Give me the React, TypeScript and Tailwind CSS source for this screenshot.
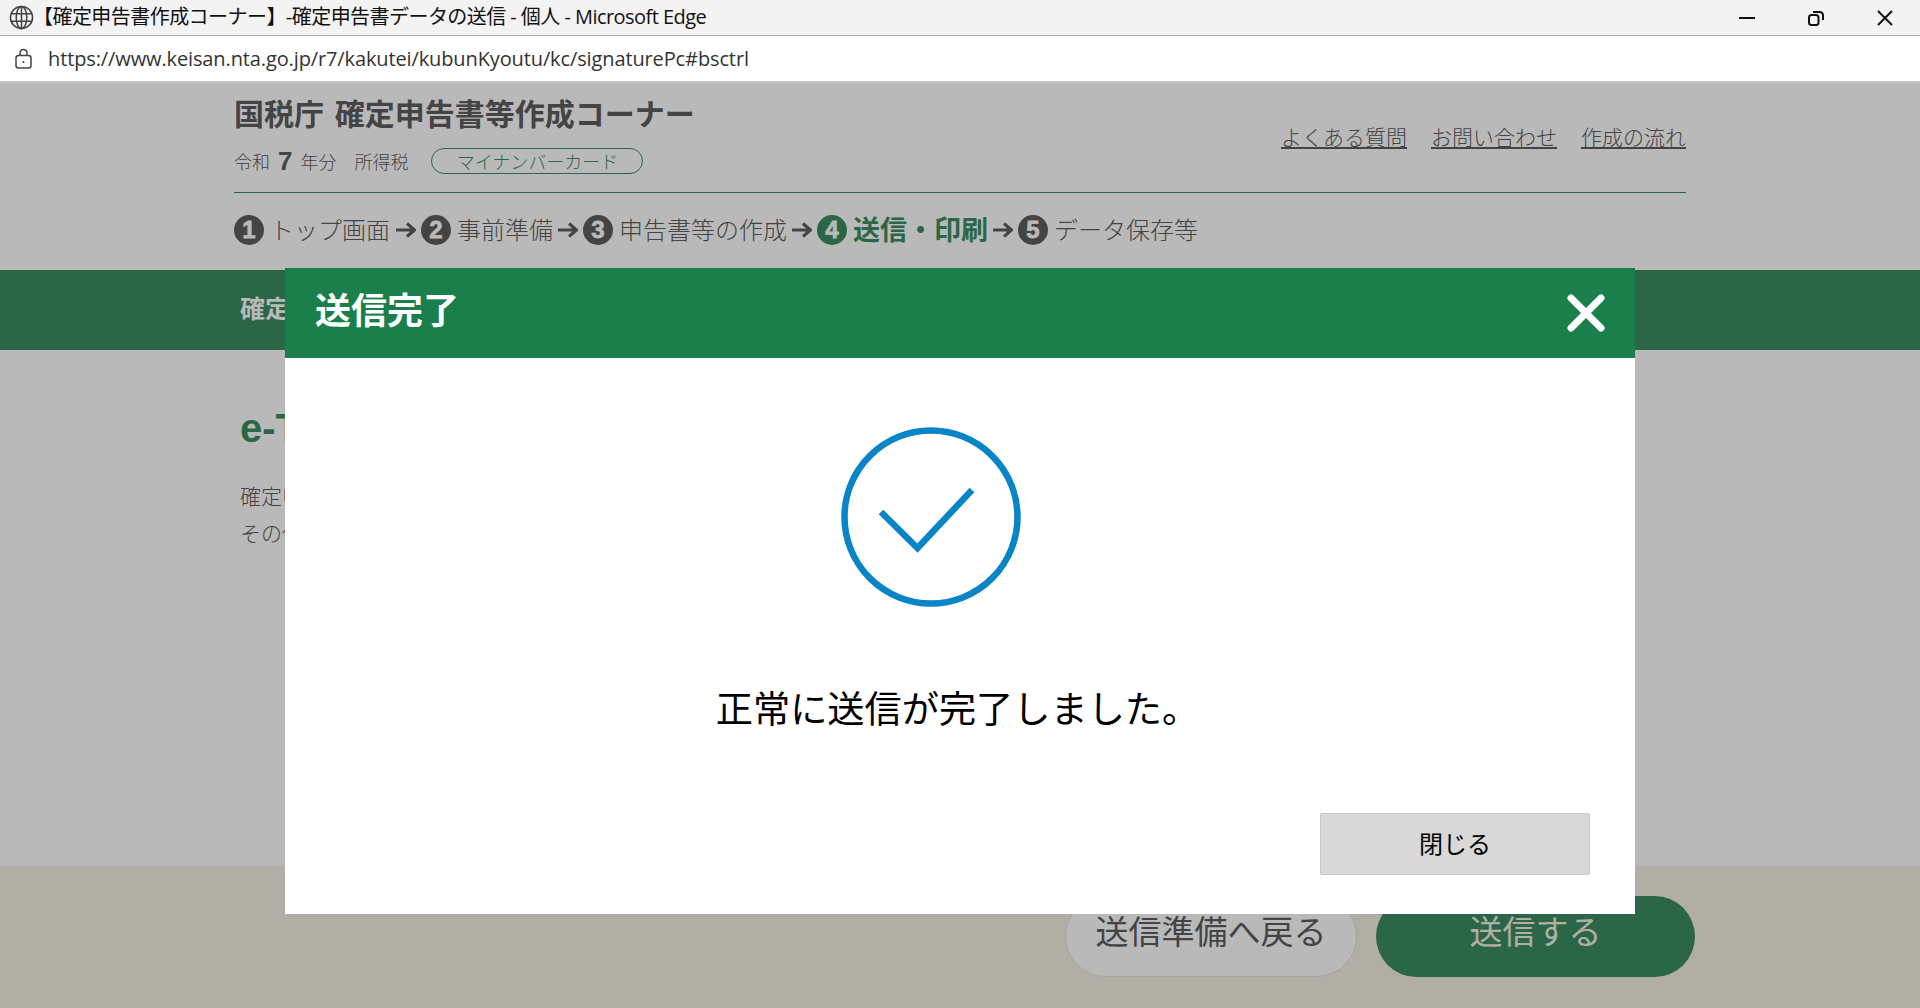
import React from "react";

const JP = "font-['Noto_Sans_CJK_JP','Noto_Sans',sans-serif]";

function Arrow({ first }: { first?: boolean }) {
  return (
    <svg width="20" height="20" viewBox="0 0 20 20" className={first ? "ml-[1px] shrink-0" : "shrink-0"}>
      <path d="M0 10H18M11 3.5L18.5 10L11 16.5" fill="none" stroke="#444444" strokeWidth="3" />
    </svg>
  );
}

function Step({ n, label, active }: { n: number; label: string; active?: boolean }) {
  return (
    <div className="flex items-center gap-[6px]">
      <span
        className={`flex h-[30px] w-[30px] items-center justify-center rounded-full text-[24px] font-bold leading-none text-[#b9b9b9] [-webkit-text-stroke:0.8px_#b9b9b9] font-['Liberation_Sans',sans-serif] ${active ? "bg-[#2b6747]" : "bg-[#444444]"}`}
      >
        {n}
      </span>
      <span className={active ? "text-[27px] font-bold text-[#2b6747]" : "pb-[2px] text-[24px] font-light text-[#444444]"}>{label}</span>
    </div>
  );
}

export default function App() {
  return (
    <div className={`relative flex h-[1008px] w-[1920px] flex-col overflow-hidden bg-[#b9b9b9] ${JP}`}>
      <div className="flex h-[36px] shrink-0 items-center border-b border-[#ababab] bg-[#f3f3f3] pl-[9px] pr-[27px]">
        <svg width="25" height="25" viewBox="0 0 26 26" fill="none" stroke="#444444" strokeWidth="1.6" className="shrink-0">
          <circle cx="13" cy="13" r="11.5" />
          <ellipse cx="13" cy="13" rx="5.5" ry="11.5" />
          <path d="M2 9H24M2 17H24M13 1.5V24.5" />
        </svg>
        <span className="ml-[-1px] pb-[1px] text-[20px] leading-none whitespace-nowrap text-[#111111] font-['Open_Sans','Noto_Sans_CJK_JP',sans-serif] tracking-[-0.55px]">
          【確定申告書作成コーナー】-確定申告書データの送信 - 個人 - Microsoft Edge
        </span>
        <div className="ml-auto flex items-center gap-[53px]">
          <svg width="16" height="16" viewBox="0 0 16 16"><path d="M0 8H16" stroke="#111111" strokeWidth="2" /></svg>
          <svg width="16" height="16" viewBox="0 0 16 16" fill="none" stroke="#111111" strokeWidth="2">
            <rect x="1" y="5" width="9.5" height="10" rx="2.5" />
            <path d="M5 2H11.5C13.5 2 15 3.5 15 5.5V10" />
          </svg>
          <svg width="16" height="16" viewBox="0 0 16 16"><path d="M1 1L15 15M15 1L1 15" stroke="#111111" strokeWidth="2" /></svg>
        </div>
      </div>

      <div className="flex h-[47px] shrink-0 items-center border-b-2 border-[#c4c4c4] bg-white pl-[15px]">
        <svg width="18" height="22" viewBox="0 0 18 22" fill="none" stroke="#444444" strokeWidth="1.5" className="shrink-0">
          <rect x="1" y="7.5" width="15" height="12.5" rx="2.5" />
          <path d="M5 7.5V5.5C5 3 6.5 1.5 8.5 1.5S12 3 12 5.5V7.5" />
          <circle cx="8.5" cy="14" r="1" fill="#444444" stroke="none" />
        </svg>
        <span className="ml-[15px] text-[20px] leading-none whitespace-nowrap text-[#333333] font-['Open_Sans',sans-serif] tracking-[-0.12px]">
          https://www.keisan.nta.go.jp/r7/kakutei/kubunKyoutu/kc/signaturePc#bsctrl
        </span>
      </div>

      <div className="mx-[234px] flex h-[110px] shrink-0 items-center justify-between border-b border-[#2b6747] pb-[2px]">
        <div className="flex flex-col pb-[8px]">
          <h1 className="text-[30px] leading-[40px] font-bold text-[#444444] [word-spacing:4px]">国税庁 確定申告書等作成コーナー</h1>
          <div className="mt-[16px] flex items-center text-[18px] leading-[26px] font-light text-[#444444]">
            <span>令和</span>
            <span className="mx-[8px] text-[26px] font-bold font-['Liberation_Sans',sans-serif]">7</span>
            <span>年分</span>
            <span className="ml-[18px]">所得税</span>
            <span className="ml-[23px] flex h-[26px] w-[212px] items-center justify-center rounded-[13px] border border-[#2b6747] text-[#2b6747]">
              マイナンバーカード
            </span>
          </div>
        </div>
        <div className="flex gap-[24px] text-[21px] font-light text-[#444444]">
          <a className="underline decoration-2 underline-offset-2">よくある質問</a>
          <a className="underline decoration-2 underline-offset-2">お問い合わせ</a>
          <a className="underline decoration-2 underline-offset-2">作成の流れ</a>
        </div>
      </div>

      <div className="flex h-[77px] shrink-0 items-center gap-[5px] pb-[4px] pl-[234px]">
        <Step n={1} label="トップ画面" />
        <Arrow first />
        <Step n={2} label="事前準備" />
        <Arrow />
        <Step n={3} label="申告書等の作成" />
        <Arrow />
        <Step n={4} label="送信・印刷" active />
        <Arrow />
        <Step n={5} label="データ保存等" />
      </div>

      <div className="flex h-[80px] shrink-0 items-center bg-[#2b6747] pb-[5px] pl-[240px] text-[25px] font-bold text-[#b9b9b9]">
        確定申告書データの送信
      </div>

      <div className="flex-1 pl-[240px] pt-[50px] text-[#444444]">
        <h2 className="text-[40px] leading-[56px] font-bold text-[#2b6747] font-['Liberation_Sans','Noto_Sans_CJK_JP',sans-serif]">e-Taxで送信</h2>
        <p className="mt-[21px] text-[21px] leading-[37px] font-light">確定申告書</p>
        <p className="text-[21px] leading-[37px] font-light">その他</p>
      </div>

      <div className="flex h-[142px] shrink-0 justify-end gap-[19px] bg-[#b1aea6] pr-[225px] pt-[30px]">
        <button className="h-[81px] w-[292px] rounded-[41px] border border-[#a8a49c] bg-[#b9b9b9] pb-[11px] text-[33px] text-[#444444]">
          送信準備へ戻る
        </button>
        <button className="h-[81px] w-[319px] rounded-[41px] bg-[#2b6747] pb-[11px] text-[33px] text-[#b1aea6]">
          送信する
        </button>
      </div>

      <div className="absolute left-[285px] top-[268px] flex h-[646px] w-[1350px] flex-col bg-white">
        <div className="flex h-[90px] shrink-0 items-center justify-between bg-[#1a7f4b] pl-[30px] pr-[29px]">
          <span className="mb-[11px] text-[36px] font-bold leading-none text-white">送信完了</span>
          <svg width="40" height="40" viewBox="0 0 40 40">
            <path d="M5 5L35 35M35 5L5 35" stroke="#ffffff" strokeWidth="7" strokeLinecap="round" />
          </svg>
        </div>
        <div className="flex flex-1 flex-col items-center">
          <svg width="180" height="180" viewBox="0 0 180 180" fill="none" stroke="#0984c6" strokeWidth="6.5" className="mt-[69px] ml-[-59px]">
            <circle cx="90" cy="90" r="86.5" />
            <path d="M40 85L76.5 121L131 63" />
          </svg>
          <p className="mt-[74px] ml-[-5px] text-[37.2px] leading-[52px] text-black">正常に送信が完了しました。</p>
          <div className="mt-[80px] flex w-full justify-end pr-[45px]">
            <button className="h-[62px] w-[270px] rounded-[2px] border border-[#d0c8c0] bg-[#d8d8d8] pb-[3px] text-[24px] text-black">
              閉じる
            </button>
          </div>
        </div>
      </div>
    </div>
  );
}
